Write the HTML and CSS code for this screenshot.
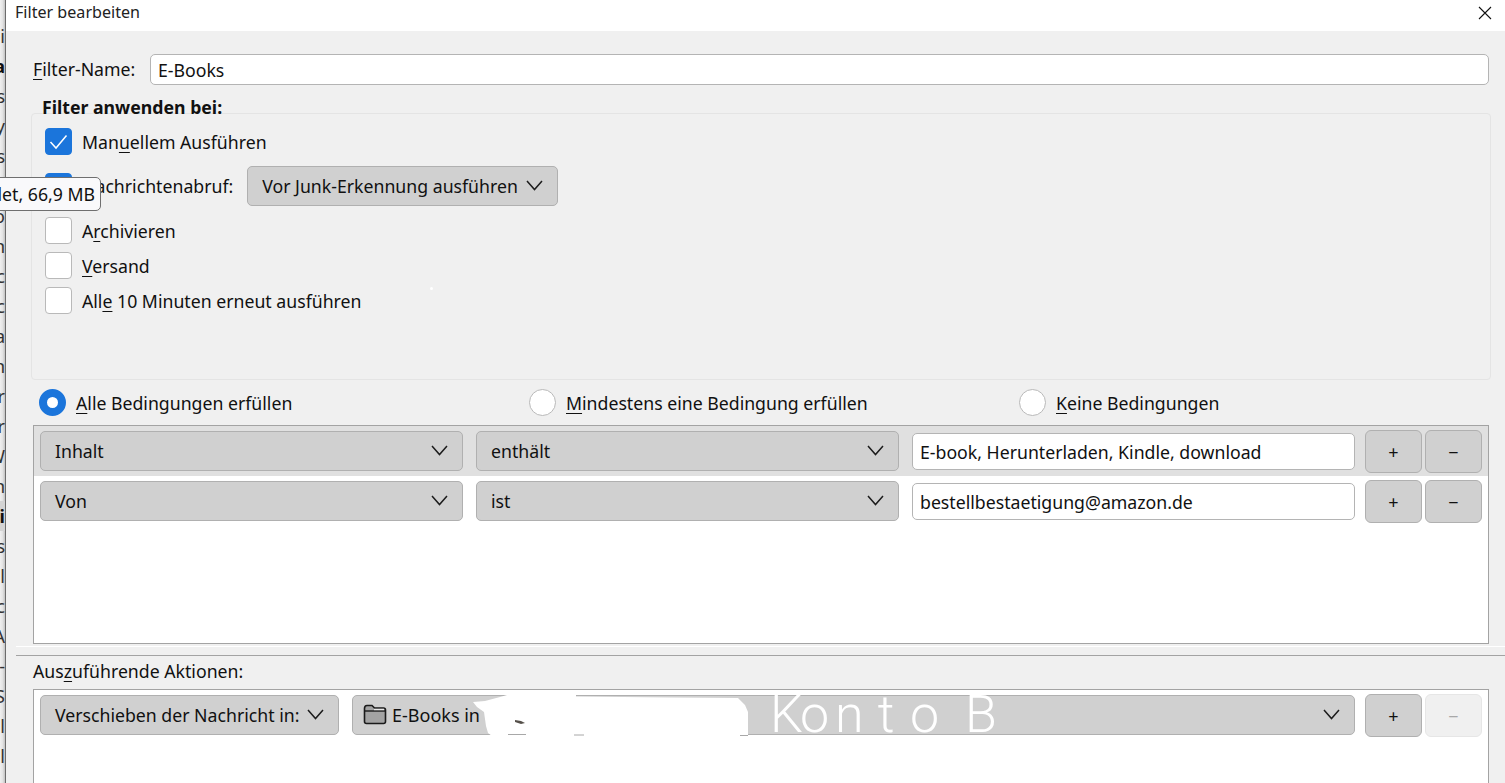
FILE: index.html
```html
<!DOCTYPE html>
<html lang="de">
<head>
<meta charset="utf-8">
<title>Filter bearbeiten</title>
<link rel="stylesheet" href="styles.css">
</head>
<body>
<svg class="icon-defs" width="0" height="0" aria-hidden="true">
  <symbol id="chev" viewBox="0 0 17 11"><path d="M1 1 L8.5 9.5 L16 1" fill="none" stroke="#1c1c1c" stroke-width="1.5"/></symbol>
</svg>
<div class="behind">
  <div class="b-row">ei</div><div class="b-row strong">a</div><div class="b-row">s</div><div class="b-row">y</div><div class="b-row">s</div><div class="b-row">e</div>
  <div class="b-row">o</div><div class="b-row">n</div><div class="b-row">c</div><div class="b-row">c</div><div class="b-row">a</div><div class="b-row">n</div>
  <div class="b-row">r</div><div class="b-row">r</div><div class="b-row">W</div><div class="b-row">n</div><div class="b-row strong hl">ri</div><div class="b-row">s</div>
  <div class="b-row">l</div><div class="b-row">c</div><div class="b-row">A</div><div class="b-row">-</div><div class="b-row">S</div><div class="b-row">l</div><div class="b-row">l</div>
</div>
<div class="dialog">
  <header class="titlebar">
    <span class="title">Filter bearbeiten</span>
    <svg class="close" width="14" height="14" viewBox="0 0 14 14"><path d="M1 1 L13 13 M13 1 L1 13" stroke="#111" stroke-width="1.1" fill="none"/></svg>
  </header>
  <main class="content">
    <div class="name-row">
      <label class="name-label"><u>F</u>ilter-Name:</label>
      <div class="field grow">E-Books</div>
    </div>
    <section class="group">
      <div class="group-title">Filter anwenden bei:</div>
      <div class="check-row"><span class="check on"><svg width="27" height="27" viewBox="0 0 27 27"><path d="M5.5 14 L11 20 L21.5 7.5" fill="none" stroke="#fff" stroke-width="1.5"/></svg></span><span>Man<u>u</u>ellem Ausführen</span></div>
      <div class="check-row tall"><span class="check on"></span><span><u>N</u>achrichtenabruf:</span>
        <div class="select timing"><span>Vor Junk-Erkennung ausführen</span><svg class="chev" width="17" height="11"><use href="#chev"/></svg></div>
      </div>
      <div class="check-row"><span class="check"></span><span>A<u>r</u>chivieren</span></div>
      <div class="check-row"><span class="check"></span><span><u>V</u>ersand</span></div>
      <div class="check-row"><span class="check"></span><span>All<u>e</u> 10 Minuten erneut ausführen</span></div>
    </section>
    <div class="radios">
      <div class="radio-item"><span class="radio on"></span><span><u>A</u>lle Bedingungen erfüllen</span></div>
      <div class="radio-item"><span class="radio"></span><span><u>M</u>indestens eine Bedingung erfüllen</span></div>
      <div class="radio-item last"><span class="radio"></span><span><u>K</u>eine Bedingungen</span></div>
    </div>
    <div class="rules">
      <div class="rule selected">
        <div class="select rule-select"><span>Inhalt</span><svg class="chev" width="17" height="11"><use href="#chev"/></svg></div>
        <div class="select rule-select"><span>enthält</span><svg class="chev" width="17" height="11"><use href="#chev"/></svg></div>
        <div class="field rule-field">E-book, Herunterladen, Kindle, download</div>
        <div class="btns"><div class="btn">+</div><div class="btn">−</div></div>
      </div>
      <div class="rule">
        <div class="select rule-select"><span>Von</span><svg class="chev" width="17" height="11"><use href="#chev"/></svg></div>
        <div class="select rule-select"><span>ist</span><svg class="chev" width="17" height="11"><use href="#chev"/></svg></div>
        <div class="field rule-field">bestellbestaetigung@amazon.de</div>
        <div class="btns"><div class="btn">+</div><div class="btn">−</div></div>
      </div>
    </div>
    <div class="separator"></div>
    <div class="actions-label">Aus<u>z</u>uführende Aktionen:</div>
    <div class="actions">
      <div class="rule">
        <div class="select action-select"><span>Verschieben der Nachricht in:</span><svg class="chev" width="17" height="11"><use href="#chev"/></svg></div>
        <div class="select folder-select">
          <span class="folder-value">
            <svg class="folder" width="24" height="21" viewBox="0 0 24 21"><path d="M1.5 4.5 Q1.5 1.5 4 1.5 H9 L11.5 4 H20.5 Q22.5 4 22.5 6 V17.5 Q22.5 19.5 20.5 19.5 H3.5 Q1.5 19.5 1.5 17.5 Z" fill="#a3a3a3" stroke="#1a1a1a" stroke-width="1.6"/><path d="M1.5 7 H22.5" stroke="#1a1a1a" stroke-width="1.4"/><path d="M11 5.5 H21" stroke="#e8e8e8" stroke-width="1.4"/></svg>
            <span>E-Books in</span>
          </span>
          <svg class="chev" width="17" height="11"><use href="#chev"/></svg>
        </div>
        <div class="btns"><div class="btn">+</div><div class="btn disabled">−</div></div>
      </div>
    </div>
  </main>
</div>
<div class="tooltip">let, 66,9 MB</div>
<span class="speck"></span>
<svg class="scribble" width="280" height="48" viewBox="0 0 280 48" aria-hidden="true">
  <path d="M1 9 L13 8 L28 4 L35 2 L42 1 L104 1 L104 3.5 L150 4 L200 4.5 L266 5 L273 12 L276 19 L276 42 L268 43 L20 43 L16 40 L14 33 L12 19 L5 14 Z" fill="#fff"/>
  <path d="M43 27 l6 1 l4 2 l-4 1 l-6 -2 Z" fill="#55504a"/>
  <path d="M36 41.5 H54 M102 42 H112 M268 42.5 H276" stroke="#a8a8a8" stroke-width="1"/>
</svg>
<div class="konto"><span class="k1">K</span><span class="k2">o</span><span class="k3">n</span><span class="k4">t</span><span class="k5">o</span><span>B</span></div>
</body>
</html>
```
FILE: styles.css
```css
* { box-sizing: border-box; }
html, body { margin: 0; height: 783px; overflow: hidden; }
body {
  position: relative;
  display: flex;
  font-family: "Noto Sans", sans-serif;
  font-size: 17.7px;
  color: #111;
  background: #f0f0f0;
}
u { text-underline-offset: 3px; text-decoration-thickness: 1px; }
.icon-defs { position: absolute; }

.behind {
  width: 5px;
  flex: none;
  padding-top: 21px;
  background: linear-gradient(to right, #f0f0f0, #e4e4e4 50%, #c4c4c4);
  color: #333;
  font-size: 18px;
}
.b-row {
  height: 30px;
  line-height: 30px;
  display: flex;
  justify-content: flex-end;
  overflow: hidden;
  white-space: nowrap;
}
.b-row.strong { font-weight: 700; color: #111; }
.b-row.hl { background: #d4d4d4; }

.dialog {
  flex: 1;
  min-width: 0;
  border-left: 1px solid #6c6c6c;
  display: flex;
  flex-direction: column;
}
.titlebar {
  height: 31px;
  flex: none;
  background: #fff;
  display: flex;
  align-items: center;
  justify-content: space-between;
  padding: 0 13px 7px 9px;
  font-size: 16.1px;
  color: #222;
}
.close { margin-top: 2px; }
.content { flex: 1; padding: 23px 16px 0 27px; min-height: 0; }

.name-row { display: flex; align-items: center; height: 31px; }
.name-label { width: 117px; flex: none; padding-bottom: 2px; }
.field {
  background: #fff;
  border: 1px solid #b4b4b4;
  border-radius: 5px;
  padding: 0 7px;
  display: flex;
  align-items: center;
  white-space: nowrap;
}
.grow { flex: 1; height: 31px; }

.group {
  margin: 28px -2px 0 -2px;
  height: 267px;
  border: 1px solid #e4e4e4;
  border-radius: 4px;
  padding-left: 13px;
}
.group-title {
  width: fit-content;
  margin: -17px 0 0 -4px;
  padding: 0 4px 0 1px;
  height: 27px;
  line-height: 20px;
  background: linear-gradient(#f0f0f0 60%, transparent 60%);
  font-weight: 700;
}
.check-row { display: flex; align-items: center; gap: 10px; height: 35px; }
.check-row.tall { height: 54px; }
.check {
  width: 27px;
  height: 27px;
  flex: none;
  background: #fff;
  border: 1px solid #b9b9b9;
  border-radius: 4px;
}
.check.on { background: #1b75db; border-color: #1b75db; }
.check.on svg { display: block; margin: -1px; }
.timing { width: 311px; height: 40px; margin-left: 4px; }

.select {
  display: flex;
  align-items: center;
  justify-content: space-between;
  background: #d0d0d0;
  border: 1px solid #b0b0b0;
  border-radius: 5px;
  padding: 0 14px 1px 14px;
  white-space: nowrap;
}
.chev { flex: none; display: block; }

.radios { display: flex; height: 45px; padding-left: 6px; }
.radio-item { width: 490px; flex: none; display: flex; align-items: center; gap: 10px; }
.radio-item.last { width: 440px; }
.radio {
  width: 27px;
  height: 27px;
  flex: none;
  background: #fff;
  border: 1px solid #b9b9b9;
  border-radius: 50%;
}
.radio.on { border: 8px solid #1b75db; }

.rules { height: 219px; border: 1px solid #a3a3a3; background: #fff; }
.rule { display: flex; align-items: center; gap: 13px; height: 50px; padding: 0 6px; }
.rule.selected { background: #e0e0e0; }
.rule-select { width: 423px; height: 40px; }
.rule-field { width: 443px; height: 37px; padding-top: 1px; }
.btns { display: flex; gap: 3px; margin-left: -3px; }
.btn {
  width: 57px;
  height: 43px;
  padding-top: 2px;
  display: flex;
  align-items: center;
  justify-content: center;
  background: #d0d0d0;
  border: 1.5px solid #b0b0b0;
  border-radius: 6px;
  font-size: 18px;
}
.btn.disabled { background: #f0f0f0; border-color: #e6e6e6; color: #a8a8a8; }

.separator {
  height: 10px;
  margin: 2px -16px 0 -17px;
  border-top: 1px solid #fff;
  border-bottom: 1px solid #a3a3a3;
}
.actions-label { height: 24px; line-height: 24px; margin: 3px 0 6px; }
.actions {
  height: 95px;
  border: 1px solid #a3a3a3;
  border-bottom: 0;
  background: #fff;
}
.action-select { width: 299px; height: 40px; }
.folder-select { width: 1003px; height: 40px; padding-left: 10px; }
.folder-value { display: flex; align-items: center; gap: 5px; font-size: 18px; }
.folder { display: block; flex: none; }

.tooltip {
  position: absolute;
  left: -6px;
  top: 177px;
  width: 107px;
  height: 34px;
  background: #f9f9fb;
  border: 1px solid #6f6f6f;
  border-radius: 5px;
  text-align: right;
  padding-right: 5px;
  line-height: 33px;
  white-space: nowrap;
}
.speck {
  position: absolute;
  left: 430px;
  top: 287px;
  width: 3px;
  height: 3px;
  border-radius: 50%;
  background: #fff;
}
.scribble { position: absolute; left: 472px; top: 693px; }
.konto {
  position: absolute;
  left: 770px;
  top: 685px;
  height: 60px;
  line-height: 60px;
  display: flex;
  font-family: "Roboto", sans-serif;
  font-weight: 300;
  font-size: 52px;
  color: #fff;
  white-space: nowrap;
}
.k1 { width: 30px; }
.k2 { width: 35px; }
.k3 { width: 27px; }
.k4 { width: 48px; text-align: center; }
.k5 { width: 55px; }
```
